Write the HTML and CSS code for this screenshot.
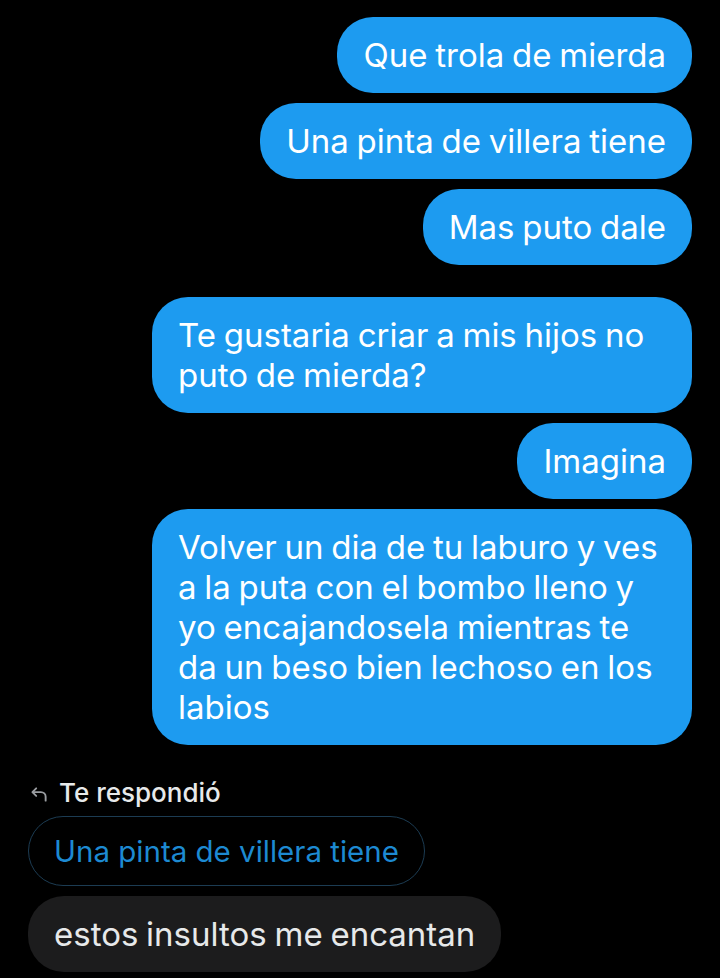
FILE: index.html
```html
<!DOCTYPE html>
<html lang="es">
<head>
  <meta charset="UTF-8">
  <title>Mensajes</title>
  <link rel="stylesheet" href="styles.css">
</head>
<body>
  <div class="chat">
    <!-- Sent messages -->
    <div class="group">
      <div class="msg sent">Que trola de mierda</div>
      <div class="msg sent">Una pinta de villera tiene</div>
      <div class="msg sent">Mas puto dale</div>
    </div>

    <div class="group">
      <div class="msg sent">Te gustaria criar a mis hijos no puto de mierda?</div>
      <div class="msg sent">Imagina</div>
      <div class="msg sent">Volver un dia de tu laburo y ves a la puta con el bombo lleno y yo encajandosela mientras te da un beso bien lechoso en los labios</div>
    </div>

    <!-- Received reply -->
    <div class="group received-group">
      <div class="reply-label">
        <svg class="reply-icon" viewBox="0 0 20 18" width="19" height="17">
          <path d="M6.5 2.5 L2.5 6.5 L6.5 10.5" fill="none" stroke="#9a9da1" stroke-width="2" stroke-linecap="round" stroke-linejoin="round"/>
          <path d="M3 6.5 H11.5 A5 5 0 0 1 16.5 11.5 V15.5" fill="none" stroke="#9a9da1" stroke-width="2" stroke-linecap="round"/>
        </svg>
        <span>Te respondió</span>
      </div>
      <div class="quote">Una pinta de villera tiene</div>
      <div class="msg received">estos insultos me encantan</div>
    </div>
  </div>
</body>
</html>
```

FILE: styles.css
```css
:root {
  --bg: #000000;
  --blue: #1d9bf0;
  --text: #ffffff;
  --muted-text: #e7e9ea;
  --grey-bubble: #1c1c1d;
  --quote-border: #1c3c53;
  --quote-text: #1d8ad2;
}

body {
  margin: 0;
  background: var(--bg);
  font-family: Inter, Roboto, sans-serif;
  color: var(--text);
}

.chat {
  display: flex;
  flex-direction: column;
  gap: 32px;
  padding: 17px 28px 0 28px;
}

.group {
  display: flex;
  flex-direction: column;
  align-items: flex-end;
  gap: 10px;
}

.msg {
  max-width: 488px;
  padding: 18px 26px;
  font-size: 33px;
  line-height: 40px;
  word-spacing: -1.5px;
  border-radius: 36px;
}

.msg.sent {
  background: var(--blue);
  color: var(--text);
}

/* Received side */
.received-group {
  align-items: flex-start;
  gap: 0;
}

.reply-label {
  display: flex;
  align-items: center;
  gap: 10px;
  padding-left: 2px;
  font-size: 26px;
  font-weight: 500;
  color: var(--muted-text);
  line-height: 32px;
  margin-bottom: 7px;
}

.reply-icon {
  margin-top: 2px;
}

.quote {
  border: 1.5px solid var(--quote-border);
  border-radius: 36px;
  padding: 0 25px;
  height: 68px;
  line-height: 68px;
  font-size: 29.5px;
  color: var(--quote-text);
  margin-bottom: 10px;
}

.msg.received {
  background: var(--grey-bubble);
  color: var(--muted-text);
}
```
